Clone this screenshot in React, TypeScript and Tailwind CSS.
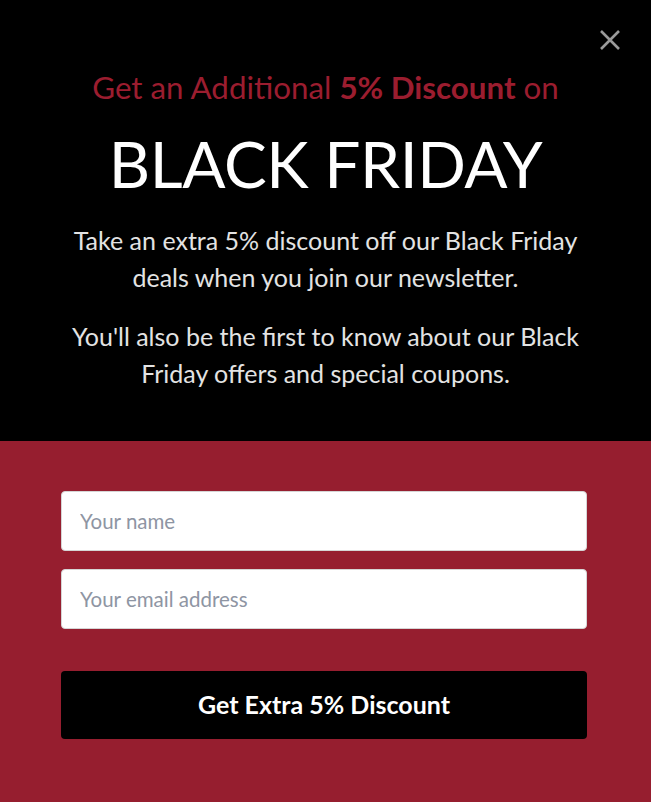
import React from "react";

export default function App() {
  return (
    <div className="w-[651px] h-[802px] flex flex-col bg-black" style={{ fontFamily: "Lato, 'Open Sans', sans-serif" }}>
      <div className="relative h-[441px] flex flex-col items-center pt-[66px]">
        <button className="absolute right-[30px] top-[29px] w-[22px] h-[22px] text-[#9a9a9a]" aria-label="Close">
          <svg viewBox="0 0 22 22" width="22" height="22" stroke="currentColor" strokeWidth="2.6" strokeLinecap="butt">
            <path d="M2 2 L20 20 M20 2 L2 20" />
          </svg>
        </button>
        <h2 className="text-[31.3px] leading-[42px] text-[#9b1d2f] text-center whitespace-nowrap">
          Get an Additional <span className="font-bold">5% Discount</span> on
        </h2>
        <h1 className="mt-[20px] text-[64px] leading-[72px] text-white text-center tracking-[-0.4px] whitespace-nowrap">BLACK FRIDAY</h1>
        <p className="mt-[22px] w-[540px] text-[25px] leading-[37px] text-[#e3e3e3] text-center">
          Take an extra 5% discount off our Black Friday deals when you join our newsletter.
        </p>
        <p className="mt-[22px] w-[540px] text-[25px] leading-[37px] text-[#e3e3e3] text-center">
          You'll also be the first to know about our Black Friday offers and special coupons.
        </p>
      </div>
      <div className="flex-1 bg-[#961e2f] pl-[61px] pr-[64px] pt-[50px] flex flex-col">
        <input
          className="h-[60px] w-full rounded-[4px] bg-white border border-[#d5d5d5] px-[18px] text-[20.5px] text-gray-800 placeholder:text-[#8e95a3] outline-none"
          placeholder="Your name"
        />
        <input
          className="mt-[18px] h-[60px] w-full rounded-[4px] bg-white border border-[#d5d5d5] px-[18px] text-[20.5px] text-gray-800 placeholder:text-[#8e95a3] outline-none"
          placeholder="Your email address"
        />
        <button className="mt-[42px] h-[68px] w-full rounded-[4px] bg-black text-white text-[25px] font-bold">
          Get Extra 5% Discount
        </button>
      </div>
    </div>
  );
}
